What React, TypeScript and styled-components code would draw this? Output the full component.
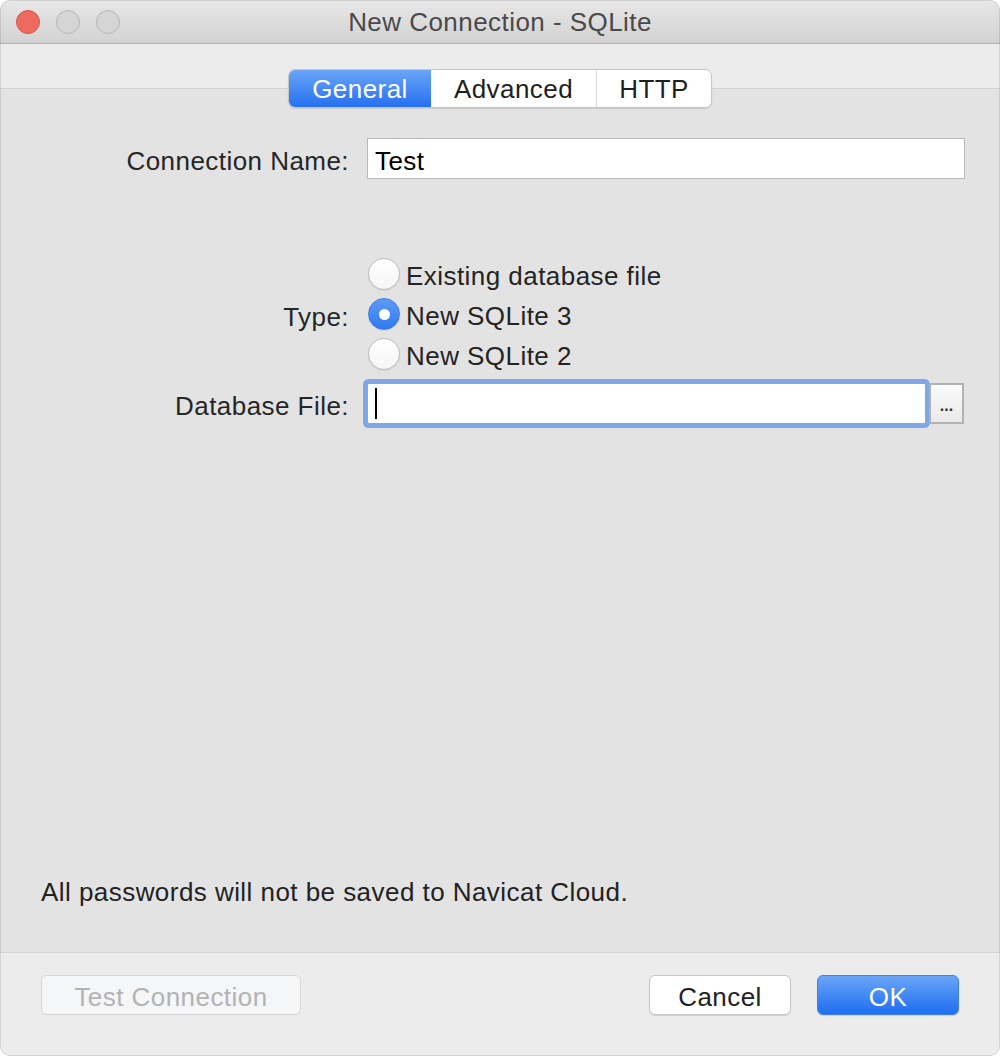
import React from "react";
import styled, { createGlobalStyle } from "styled-components";

const Global = createGlobalStyle`
  html, body { margin: 0; padding: 0; background: #ffffff; }
  body { font-family: "Liberation Sans", Arial, sans-serif; }
  * { box-sizing: border-box; }
`;

const Window = styled.div`
  position: relative;
  width: 1000px;
  height: 1056px;
  border-radius: 10px;
  overflow: hidden;
  display: flex;
  flex-direction: column;
  background: #e3e3e3;
  font-size: 26px;
  letter-spacing: 0.45px;
  color: #242424;
  &::after {
    content: "";
    position: absolute;
    inset: 0;
    border-radius: 10px;
    border: 1px solid rgba(0, 0, 0, 0.1);
    pointer-events: none;
  }
`;

const TitleBar = styled.div`
  height: 44px;
  flex: none;
  display: flex;
  align-items: center;
  position: relative;
  background: linear-gradient(#e9e8e9, #d3d2d3);
  border-bottom: 1px solid #b3b3b3;
  padding-left: 16px;
`;

const Lights = styled.div`
  display: flex;
  gap: 16px;
  align-items: center;
`;

const Light = styled.span<{ $color: string; $edge: string }>`
  width: 24px;
  height: 24px;
  border-radius: 50%;
  background: ${(p) => p.$color};
  border: 1px solid ${(p) => p.$edge};
`;

const Title = styled.div`
  position: absolute;
  left: 0;
  right: 0;
  top: 0;
  bottom: 0;
  display: flex;
  align-items: center;
  justify-content: center;
  color: #4a4a4a;
  pointer-events: none;
  padding-top: 2px;
`;

const TabHeader = styled.div`
  flex: none;
  display: flex;
  justify-content: center;
  padding-top: 25px;
  background: linear-gradient(
    to bottom,
    #ececec 0,
    #ececec 44px,
    #d3d3d3 44px,
    #d3d3d3 45px,
    #e3e3e3 45px
  );
`;

const Segmented = styled.div`
  display: flex;
  height: 39px;
  border-radius: 7px;
  border: 1px solid #c6c6c6;
  box-shadow: 0 1px 1px rgba(0, 0, 0, 0.12);
  background: #ffffff;
  overflow: hidden;
`;

const Segment = styled.div<{ $w: number; $active?: boolean; $sep?: boolean }>`
  width: ${(p) => p.$w}px;
  display: flex;
  align-items: center;
  justify-content: center;
  padding-top: 2px;
  color: ${(p) => (p.$active ? "#ffffff" : "#1f1f1f")};
  background: ${(p) =>
    p.$active ? "linear-gradient(#6ba5f7, #2570f0)" : "#ffffff"};
  border-left: ${(p) => (p.$sep ? "1px solid #d9d9d9" : "none")};
`;

const Content = styled.div`
  flex: 1;
  display: flex;
  flex-direction: column;
  padding: 30px 35px 45px 0;
`;

const Form = styled.div`
  display: grid;
  grid-template-columns: 349px 1fr;
  column-gap: 18px;
  align-items: center;
`;

const Label = styled.div`
  text-align: right;
  line-height: 30px;
  padding-top: 5px;
  color: #262626;
`;

const TextBox = styled.div<{ $focus?: boolean }>`
  height: 41px;
  background: #ffffff;
  border: 1px solid ${(p) => (p.$focus ? "#7fa6e6" : "#b8b8b8")};
  display: flex;
  align-items: center;
  padding-left: 7px;
  padding-top: ${(p) => (p.$focus ? "0" : "4px")};
  color: #000000;
  line-height: 30px;
  border-radius: ${(p) => (p.$focus ? "2px" : "0")};
  box-shadow: ${(p) => (p.$focus ? "0 0 0 4px #7ea7e8" : "none")};
  flex: 1;
`;

const Caret = styled.span`
  width: 2px;
  height: 31px;
  background: #000;
`;

const RadioGroup = styled.div`
  display: flex;
  flex-direction: column;
  margin-top: 75px;
`;

const RadioRow = styled.div`
  height: 40px;
  display: flex;
  align-items: center;
  gap: 6px;
  margin-left: 1px;
`;

const RadioCircle = styled.span<{ $on?: boolean }>`
  width: 32px;
  height: 32px;
  flex: none;
  border-radius: 50%;
  display: flex;
  align-items: center;
  justify-content: center;
  background: ${(p) =>
    p.$on ? "linear-gradient(#5e9bf6, #2f79f0)" : "linear-gradient(#ffffff, #f6f6f6)"};
  border: 1px solid ${(p) => (p.$on ? "#3b7fe8" : "#bcbcbc")};
  box-shadow: 0 1px 1px rgba(0, 0, 0, 0.08);
  &::after {
    content: "";
    display: ${(p) => (p.$on ? "block" : "none")};
    width: 11px;
    height: 11px;
    border-radius: 50%;
    background: #ffffff;
  }
`;

const RadioText = styled.span`
  line-height: 30px;
  padding-top: 4px;
  color: #242424;
`;

const TypeLabel = styled(Label)`
  margin-top: 75px;
`;

const FileRow = styled.div`
  display: flex;
  align-items: center;
  gap: 3px;
  margin-top: 9px;
  margin-right: 1px;
`;

const DotsButton = styled.div`
  width: 35px;
  height: 41px;
  border: 2px solid #b2b2b2;
  background: linear-gradient(#fbfbfb, #e9e9e9);
  display: flex;
  align-items: center;
  justify-content: center;
  font-size: 16px;
  font-weight: bold;
  letter-spacing: 0;
  color: #333;
  padding-top: 4px;
`;

const FileLabel = styled(Label)`
  margin-top: 9px;
`;

const Note = styled.div`
  margin-top: auto;
  padding-left: 41px;
  padding-top: 2px;
  line-height: 30px;
  color: #222222;
`;

const Footer = styled.div`
  flex: none;
  height: 104px;
  background: #ececec;
  border-top: 1px solid #d6d6d6;
  display: flex;
  align-items: flex-start;
  padding: 22px 41px 0 41px;
`;

const Button = styled.div<{ $w: number; $kind: "disabled" | "normal" | "primary" }>`
  width: ${(p) => p.$w}px;
  height: 40px;
  border-radius: 6px;
  display: flex;
  align-items: center;
  justify-content: center;
  line-height: 30px;
  padding-top: 3px;
  background: ${(p) =>
    p.$kind === "primary"
      ? "linear-gradient(#6aa5f8, #1e6ef0)"
      : p.$kind === "disabled"
      ? "#f5f6f8"
      : "#ffffff"};
  color: ${(p) =>
    p.$kind === "primary" ? "#ffffff" : p.$kind === "disabled" ? "#b3b3b3" : "#222222"};
  border: 1px solid
    ${(p) =>
      p.$kind === "primary" ? "#3f82ee" : p.$kind === "disabled" ? "#d8d8d8" : "#c6c6c6"};
  box-shadow: ${(p) => (p.$kind === "disabled" ? "none" : "0 1px 1px rgba(0,0,0,0.12)")};
`;

const Spacer = styled.div`
  flex: 1;
`;

const ButtonGap = styled.div`
  width: 26px;
`;

export default function App() {
  return (
    <>
      <Global />
      <Window>
        <TitleBar>
          <Lights>
            <Light $color="#ee6a5f" $edge="#d6574c" />
            <Light $color="#d6d5d6" $edge="#b6b6b6" />
            <Light $color="#d6d5d6" $edge="#b6b6b6" />
          </Lights>
          <Title>New Connection - SQLite</Title>
        </TitleBar>
        <TabHeader>
          <Segmented>
            <Segment $w={142} $active>
              General
            </Segment>
            <Segment $w={165}>Advanced</Segment>
            <Segment $w={115} $sep>
              HTTP
            </Segment>
          </Segmented>
        </TabHeader>
        <Content>
          <Form>
            <Label>Connection Name:</Label>
            <TextBox>Test</TextBox>

            <TypeLabel>Type:</TypeLabel>
            <RadioGroup>
              <RadioRow>
                <RadioCircle />
                <RadioText>Existing database file</RadioText>
              </RadioRow>
              <RadioRow>
                <RadioCircle $on />
                <RadioText>New SQLite 3</RadioText>
              </RadioRow>
              <RadioRow>
                <RadioCircle />
                <RadioText>New SQLite 2</RadioText>
              </RadioRow>
            </RadioGroup>

            <FileLabel>Database File:</FileLabel>
            <FileRow>
              <TextBox $focus>
                <Caret />
              </TextBox>
              <DotsButton>...</DotsButton>
            </FileRow>
          </Form>
          <Note>All passwords will not be saved to Navicat Cloud.</Note>
        </Content>
        <Footer>
          <Button $w={260} $kind="disabled">
            Test Connection
          </Button>
          <Spacer />
          <Button $w={142} $kind="normal">
            Cancel
          </Button>
          <ButtonGap />
          <Button $w={142} $kind="primary">
            OK
          </Button>
        </Footer>
      </Window>
    </>
  );
}
